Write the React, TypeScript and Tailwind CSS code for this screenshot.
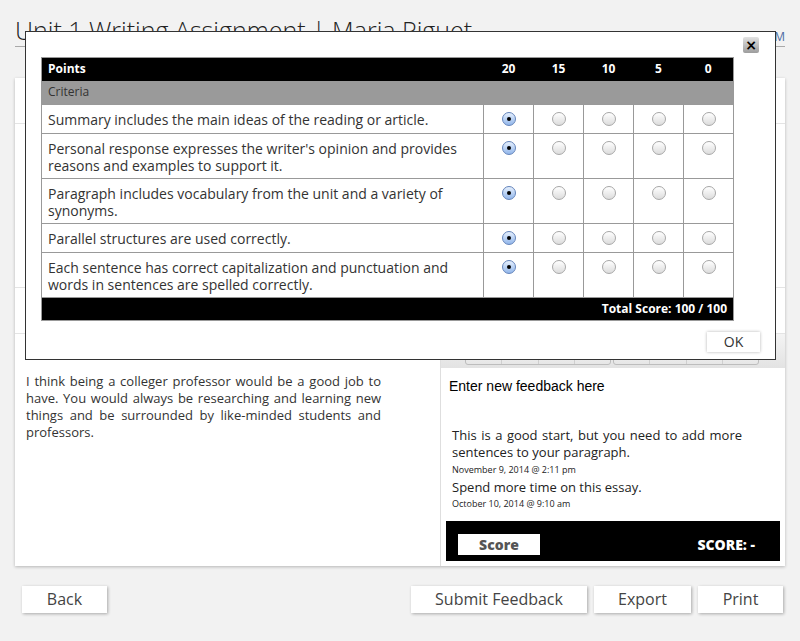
import React from 'react';

const criteria = [
  { text: 'Summary includes the main ideas of the reading or article.', score: 20 },
  { text: "Personal response expresses the writer's opinion and provides reasons and examples to support it.", score: 20 },
  { text: 'Paragraph includes vocabulary from the unit and a variety of synonyms.', score: 20 },
  { text: 'Parallel structures are used correctly.', score: 20 },
  { text: 'Each sentence has correct capitalization and punctuation and words in sentences are spelled correctly.', score: 20 },
];

const points = [20, 15, 10, 5, 0];

const Radio: React.FC<{ checked: boolean }> = ({ checked }) =>
  checked ? (
    <span className="flex h-[14px] w-[14px] items-center justify-center rounded-full border border-[#6585bb] bg-gradient-to-b from-[#e6f0fd] to-[#92b6ea]">
      <span className="h-[4px] w-[4px] rounded-full bg-black" />
    </span>
  ) : (
    <span className="block h-[14px] w-[14px] rounded-full border border-[#a8a8a8] bg-gradient-to-b from-white to-[#dcdcdc]" />
  );

const ToolbarGroup: React.FC = () => (
  <div className="flex h-[26px] w-[146px] overflow-hidden rounded-[3px] border border-[#bdbdbd] bg-gradient-to-b from-white to-[#e6e6e6]">
    <div className="flex-1 border-r border-[#cfcfcf]" />
    <div className="flex-1 border-r border-[#cfcfcf]" />
    <div className="flex-1 border-r border-[#cfcfcf]" />
    <div className="flex-1" />
  </div>
);

const PageButton: React.FC<{ label: string; width: string }> = ({ label, width }) => (
  <button className={`h-[27px] ${width} bg-white text-[16px] leading-[27px] text-[#444] shadow-[1px_1px_3px_rgba(0,0,0,0.3)]`}>
    {label}
  </button>
);

const RubricModal: React.FC = () => (
  <div className="absolute left-[25px] top-[31px] h-[329px] w-[751px] border border-[#333] bg-white">
    <button className="absolute right-[16px] top-[5px] flex h-[16px] w-[16px] items-center justify-center rounded-[2px] bg-gradient-to-b from-[#e2e2e2] to-[#9d9d9d] font-['DejaVu_Sans',sans-serif] text-[14px] font-bold leading-none text-black">
      ×
    </button>
    <div className="pl-[15px] pt-[25px]">
      <table className="w-[693px] border-collapse border border-[#999] text-[#333]">
        <thead>
          <tr className="h-[23px] bg-black text-[12px] font-bold text-white">
            <th className="px-[6px] text-left">Points</th>
            {points.map(p => (
              <th key={p} className="w-[50px] text-center">{p}</th>
            ))}
          </tr>
          <tr className="h-[24px] bg-[#9a9a9a] text-[12px] text-[#333]">
            <td colSpan={6} className="px-[6px] text-left font-normal">Criteria</td>
          </tr>
        </thead>
        <tbody>
          {criteria.map((c, i) => (
            <tr key={i} className="text-[14px] leading-[17px]">
              <td className="border border-[#999] px-[6px] pb-[4px] pt-[6px] align-top">{c.text}</td>
              {points.map(p => (
                <td key={p} className="border border-[#999] pb-[7px] pt-[7px] align-top">
                  <div className="flex justify-center">
                    <Radio checked={p === c.score} />
                  </div>
                </td>
              ))}
            </tr>
          ))}
          <tr className="h-[23px] bg-black text-[12px] font-bold text-white">
            <td colSpan={6} className="px-[6px] text-right">Total Score: 100 / 100</td>
          </tr>
        </tbody>
      </table>
    </div>
    <div className="flex justify-end pr-[15px] pt-[11px]">
      <button className="h-[20px] w-[53px] bg-white text-[14px] leading-[20px] text-[#333] shadow-[0_0_3px_rgba(0,0,0,0.3)]">
        OK
      </button>
    </div>
  </div>
);

const App: React.FC = () => {
  return (
    <div className="relative min-h-[641px] w-[800px] bg-[#f2f2f2] font-['Open_Sans',sans-serif] text-[#333]">
      <div className="mx-[15px] flex items-end justify-between border-b border-[#a9a9a9] pb-[3px] pt-[18px]">
        <h1 className="text-[25px] font-light leading-[25px] text-[#222]">Unit 1 Writing Assignment | Maria Piguet</h1>
        <span className="text-[12px] leading-[12px] text-[#4b6aa3]">Last saved: November 9, 2014 2:11 PM</span>
      </div>

      <div className="mx-[15px] mt-[31px] bg-white shadow-[0_1px_3px_rgba(0,0,0,0.25)]">
        <div className="flex h-[46px] items-center border-b border-[#e4e4e4] px-[11px] text-[14px]">
          Due: November 10, 2014
        </div>
        <div className="h-[164px] border-b border-[#e4e4e4] px-[11px] py-[10px] text-[13px] leading-[17px]">
          Write a paragraph about a job you would like to have. Include a summary of the reading and your personal response.
        </div>
        <div className="flex h-[46px] items-center border-b border-[#e4e4e4] px-[11px] text-[14px]">
          Student Response
        </div>

        <div className="flex h-[232px]">
          <div className="w-[426px] border-r border-[#dedede] pl-[11px] pt-[39px]">
            <p className="w-[355px] text-justify text-[13px] leading-[17px] text-[#333]">
              I think being a colleger professor would be a good job to have. You would always be researching and learning new things and be surrounded by like-minded students and professors.
            </p>
          </div>

          <div className="flex flex-1 flex-col">
            <div className="flex h-[34px] gap-[2px] bg-gradient-to-b from-[#f4f4f4] to-[#e3e3e3] pl-[24px] pt-[5px]">
              <ToolbarGroup />
              <ToolbarGroup />
            </div>
            <div className="pl-[8px] pt-[10px] font-['Liberation_Sans',Arial,sans-serif] text-[14px] leading-[16px] text-black">
              Enter new feedback here
            </div>
            <div className="mt-[33px] w-[301px] pl-[11px] text-[#222]">
              <p className="text-justify text-[13px] leading-[17px]">
                This is a good start, but you need to add more sentences to your paragraph.
              </p>
              <p className="mt-[3px] text-[9px] leading-[12px]">November 9, 2014 @ 2:11 pm</p>
              <p className="mt-[3px] text-[13px] leading-[17px]">Spend more time on this essay.</p>
              <p className="mt-[2px] text-[9px] leading-[12px]">October 10, 2014 @ 9:10 am</p>
            </div>
            <div className="mx-[5px] mb-[5px] mt-auto flex h-[40px] items-end justify-between bg-black pb-[6px] pl-[12px] pr-[25px]">
              <div className="flex h-[21px] w-[82px] items-center justify-center bg-white text-[14px] font-extrabold text-[#555]">
                Score
              </div>
              <div className="text-[14px] font-extrabold leading-[20px] text-white">SCORE: -</div>
            </div>
          </div>
        </div>
      </div>

      <div className="mt-[20px] flex items-center justify-between pl-[22px] pr-[17px]">
        <PageButton label="Back" width="w-[85px]" />
        <div className="flex gap-[7px]">
          <PageButton label="Submit Feedback" width="w-[176px]" />
          <PageButton label="Export" width="w-[97px]" />
          <PageButton label="Print" width="w-[85px]" />
        </div>
      </div>

      <RubricModal />
    </div>
  );
};

export default App;
